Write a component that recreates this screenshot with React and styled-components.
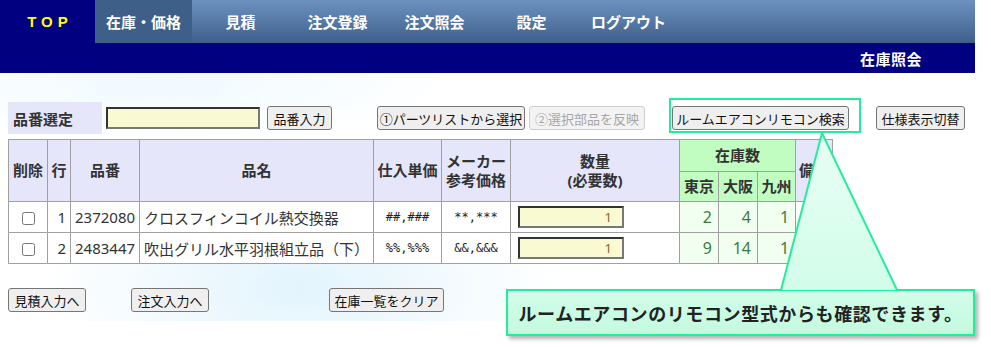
import React, { Fragment } from 'react'
import styled, { createGlobalStyle } from 'styled-components'

const JP = `"Noto Sans", "Noto Sans CJK JP", sans-serif`

const GlobalStyle = createGlobalStyle`
  body {
    margin: 0;
    background: #fff;
    font-family: ${JP};
    color: #333;
  }
`

const Page = styled.div`
  position: relative;
  width: 991px;
  height: 347px;
  overflow: hidden;
`

const NavBar = styled.div`
  display: flex;
  width: 975px;
  height: 43px;
  background: linear-gradient(#6d92bf, #3f5f8b);
`
const TopItem = styled.div`
  width: 95px;
  display: flex;
  align-items: center;
  justify-content: center;
  padding-left: 5px;
  box-sizing: border-box;
  background: #000080;
  color: #ffff00;
  font-family: "Liberation Sans", Arial, sans-serif;
  font-weight: bold;
  font-size: 15px;
  letter-spacing: 5px;
`
const NavItem = styled.div`
  width: 97px;
  display: flex;
  align-items: center;
  justify-content: center;
  color: #fff;
  font-weight: bold;
  font-size: 15px;
  background: ${(p) => (p.$active ? '#3e5f87' : 'transparent')};
`
const SubBar = styled.div`
  width: 975px;
  height: 30px;
  background: #000080;
  display: flex;
  align-items: center;
  justify-content: flex-end;
`
const PageTitle = styled.div`
  color: #fff;
  font-weight: bold;
  font-size: 15px;
  letter-spacing: 0.5px;
  margin-right: 53px;
`

const Content = styled.div`
  padding: 29px 0 9px 8px;
  background:
    radial-gradient(ellipse 260px 120px at 300px 215px, #e2f4fd, rgba(255, 255, 255, 0)),
    radial-gradient(ellipse 300px 60px at 160px 10px, #f0faff, rgba(255, 255, 255, 0));
`

const ControlRow = styled.div`
  display: flex;
  align-items: center;
  height: 32px;
`
const SelectLabel = styled.div`
  width: 94px;
  height: 32px;
  box-sizing: border-box;
  padding-left: 5px;
  display: flex;
  align-items: center;
  background: #e6e6fa;
  font-weight: bold;
  font-size: 15px;
`
const CodeInput = styled.input`
  margin-left: 4px;
  width: 154px;
  height: 22px;
  box-sizing: border-box;
  background: #fafad2;
  border: 2px solid;
  border-color: #333 #777 #777 #333;
  padding: 0;
`
const Button = styled.button`
  margin-left: ${(p) => p.$ml || 0}px;
  width: ${(p) => p.$w}px;
  height: 24px;
  padding: 0;
  box-sizing: border-box;
  white-space: nowrap;
  font-family: ${JP};
  font-size: 13px;
  color: ${(p) => (p.disabled ? '#a6a6a6' : '#111')};
  background: ${(p) => (p.disabled ? '#f3f3f3' : '#efefef')};
  border: 1px solid ${(p) => (p.disabled ? '#cfcfcf' : '#767676')};
  border-radius: 3px;
`

const Table = styled.table`
  margin-top: 5px;
  width: 824px;
  table-layout: fixed;
  border-collapse: collapse;
  background: #fff;
`
const Th = styled.th`
  background: ${(p) => (p.$stock ? '#c1fcc1' : '#e6e6fa')};
  border: 1px solid #a0a0a0;
  font-size: 15px;
  font-weight: bold;
  line-height: 19px;
  padding: 0;
  height: ${(p) => p.$h || 30}px;
  color: #333;
`
const Td = styled.td`
  border: 1px solid #a0a0a0;
  height: 30px;
  padding: ${(p) => (p.$align === 'right' ? '0 4px 0 0' : p.$align === 'left' ? '0 0 0 4px' : '0')};
  text-align: ${(p) => p.$align || 'center'};
  font-size: 15px;
  white-space: nowrap;
  overflow: hidden;
`
const PriceCell = styled(Td)`
  font-family: "DejaVu Sans Mono", monospace;
  font-size: 12px;
  color: #222;
`
const StockCell = styled(Td)`
  background: #f0fff0;
  color: #3f7a3a;
  font-size: 16px;
  padding-right: 6px;
`
const Check = styled.input`
  margin: 0;
  width: 13px;
  height: 13px;
  vertical-align: middle;
`
const QtyInput = styled.input`
  width: 106px;
  height: 22px;
  box-sizing: border-box;
  margin-left: 3px;
  background: #fafad2;
  border: 2px solid;
  border-color: #333 #777 #777 #333;
  text-align: right;
  padding: 0 10px 0 0;
  font-family: ${JP};
  font-size: 13px;
  color: #86691f;
  vertical-align: middle;
`

const FooterRow = styled.div`
  display: flex;
  margin-top: 24px;
`

const Highlight = styled.div`
  position: absolute;
  left: 669px;
  top: 98px;
  width: 192px;
  height: 35px;
  box-sizing: border-box;
  border: 2px solid #22ee99;
  pointer-events: none;
`
const Callout = styled.div`
  position: absolute;
  left: 506px;
  top: 289px;
  width: 469px;
  height: 47px;
  box-sizing: border-box;
  border: 2px solid #22ee99;
  background: linear-gradient(#d2fdea, #c3fadf);
  box-shadow: 3px 3px 4px rgba(0, 0, 0, 0.3);
  display: flex;
  align-items: center;
  justify-content: center;
  font-family: "Noto Sans CJK JP", sans-serif;
  font-weight: bold;
  font-size: 18px;
  letter-spacing: 0.6px;
  color: #222;
`
const Pointer = styled.svg`
  position: absolute;
  left: 775px;
  top: 131px;
`

const rows = [
  { no: 1, code: '2372080', name: 'クロスフィンコイル熱交換器', cost: '##,###', maker: '**,***', stock: [2, 4, 1] },
  { no: 2, code: '2483447', name: '吹出グリル水平羽根組立品（下）', cost: '%%,%%%', maker: '&&,&&&', stock: [9, 14, 1] },
]

const menu = ['在庫・価格', '見積', '注文登録', '注文照会', '設定', 'ログアウト']

export default function App() {
  return (
    <Fragment>
      <GlobalStyle />
      <Page>
        <NavBar>
          <TopItem>TOP</TopItem>
          {menu.map((m, i) => (
            <NavItem key={m} $active={i === 0}>{m}</NavItem>
          ))}
        </NavBar>
        <SubBar>
          <PageTitle>在庫照会</PageTitle>
        </SubBar>

        <Content>
          <ControlRow>
            <SelectLabel>品番選定</SelectLabel>
            <CodeInput type="text" />
            <Button $ml={7} $w={65}>品番入力</Button>
            <Button $ml={45} $w={148}>①パーツリストから選択</Button>
            <Button $ml={4} $w={116} disabled>②選択部品を反映</Button>
            <Button $ml={27} $w={177}>ルームエアコンリモコン検索</Button>
            <Button $ml={27} $w={89}>仕様表示切替</Button>
          </ControlRow>

          <Table>
            <colgroup>
              {[39, 23, 69, 234, 68, 69, 169, 39, 39, 38, 37].map((w, i) => (
                <col key={i} style={{ width: w }} />
              ))}
            </colgroup>
            <thead>
              <tr>
                <Th rowSpan={2}>削除</Th>
                <Th rowSpan={2}>行</Th>
                <Th rowSpan={2}>品番</Th>
                <Th rowSpan={2}>品名</Th>
                <Th rowSpan={2}>仕入単価</Th>
                <Th rowSpan={2}>メーカー<br />参考価格</Th>
                <Th rowSpan={2}>数量<br />(必要数)</Th>
                <Th colSpan={3} $stock $h={31}>在庫数</Th>
                <Th rowSpan={2}>備考</Th>
              </tr>
              <tr>
                <Th $stock $h={29}>東京</Th>
                <Th $stock $h={29}>大阪</Th>
                <Th $stock $h={29}>九州</Th>
              </tr>
            </thead>
            <tbody>
              {rows.map((r) => (
                <tr key={r.no}>
                  <Td><Check type="checkbox" /></Td>
                  <Td $align="right">{r.no}</Td>
                  <Td $align="left">{r.code}</Td>
                  <Td $align="left">{r.name}</Td>
                  <PriceCell>{r.cost}</PriceCell>
                  <PriceCell>{r.maker}</PriceCell>
                  <Td $align="left"><QtyInput type="text" defaultValue="1" /></Td>
                  {r.stock.map((s, i) => (
                    <StockCell key={i} $align="right">{s}</StockCell>
                  ))}
                  <Td />
                </tr>
              ))}
            </tbody>
          </Table>

          <FooterRow>
            <Button $w={78}>見積入力へ</Button>
            <Button $ml={45} $w={78}>注文入力へ</Button>
            <Button $ml={120} $w={115}>在庫一覧をクリア</Button>
          </FooterRow>
        </Content>

        <Highlight />
        <Callout>ルームエアコンのリモコン型式からも確認できます。</Callout>
        <Pointer width="130" height="162" viewBox="0 0 130 162">
          <defs>
            <linearGradient id="ptr" x1="0" y1="0" x2="0" y2="1">
              <stop offset="0" stopColor="#e8fef5" />
              <stop offset="1" stopColor="#d2fdea" />
            </linearGradient>
          </defs>
          <polygon points="47,2 6,159 122,159" fill="url(#ptr)" />
          <polyline points="6,159 47,2 122,159" fill="none" stroke="#22ee99" strokeWidth="2" strokeLinejoin="miter" />
        </Pointer>
      </Page>
    </Fragment>
  )
}
